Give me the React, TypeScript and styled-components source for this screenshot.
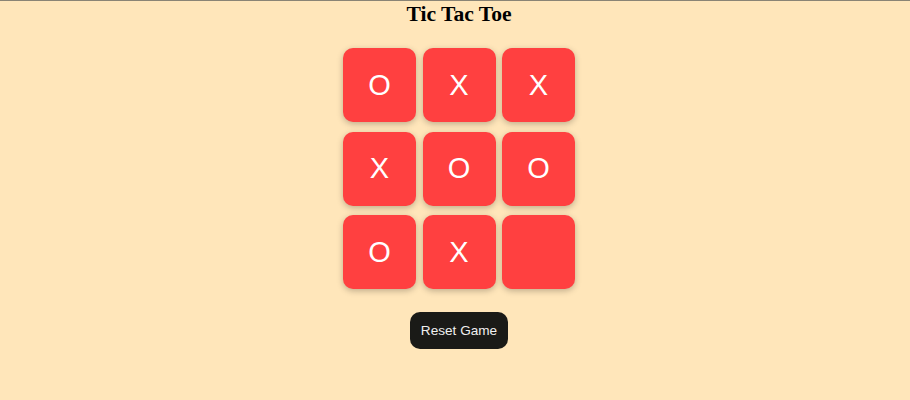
import React, { useState } from 'react';
import styled, { createGlobalStyle } from 'styled-components';

const GlobalStyle = createGlobalStyle`
  html, body {
    margin: 0;
    padding: 0;
  }
  body {
    background-color: #ffe6ba;
    border-top: 1px solid #8a8475;
    min-height: 400px;
    box-sizing: border-box;
  }
`;

type Mark = 'X' | 'O' | null;

const start: Mark[] = ['O', 'X', 'X', 'X', 'O', 'O', 'O', 'X', null];

const App: React.FC = () => {
    const [cells, setCells] = useState<Mark[]>(start);

    return (
        <Page>
            <GlobalStyle />
            <Title>Tic Tac Toe</Title>
            <Board>
                {cells.map((mark, i) => (
                    <Cell key={i}>{mark}</Cell>
                ))}
            </Board>
            <ResetButton onClick={() => setCells(Array(9).fill(null))}>Reset Game</ResetButton>
        </Page>
    )
}

const Page = styled.div`
  display: flex;
  flex-direction: column;
  align-items: center;
  padding-left: 8px;
`;

const Title = styled.h1`
  font-family: "Liberation Serif", "Times New Roman", serif;
  font-size: 21.6px;
  font-weight: bold;
  color: #000;
  margin: 1px 0 0;
  line-height: 24px;
`;

const Board = styled.div`
  display: grid;
  grid-template-columns: repeat(3, 73px);
  grid-auto-rows: 74px;
  column-gap: 6.5px;
  row-gap: 9.5px;
  margin-top: 22px;
`;

const Cell = styled.div`
  background-color: #ff4040;
  border-radius: 10px;
  box-shadow: 0 2px 6px rgba(0, 0, 0, 0.25);
  display: flex;
  align-items: center;
  justify-content: center;
  font-family: "Liberation Sans", Arial, sans-serif;
  font-size: 29px;
  color: #fff;
`;

const ResetButton = styled.button`
  margin-top: 23px;
  height: 37px;
  padding: 0 11px;
  background-color: #1a1a17;
  color: #f0f0f0;
  border: none;
  border-radius: 10px;
  font-family: "Liberation Sans", Arial, sans-serif;
  font-size: 13.6px;
  cursor: pointer;
`;

export default App;
